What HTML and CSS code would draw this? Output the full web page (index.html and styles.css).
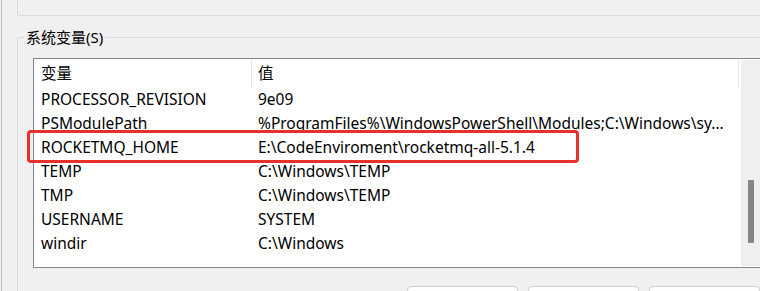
FILE: index.html
```html
<!DOCTYPE html>
<html lang="zh-CN">
<head>
    <meta charset="UTF-8">
    <meta name="viewport" content="width=device-width, initial-scale=1.0">
    <title>环境变量</title>
    <link rel="stylesheet" href="styles.css">
</head>
<body>
    <div class="dialog">
        <div class="user-group"></div>

        <fieldset class="sys-group">
            <legend>系统变量(S)</legend>
            <div class="listbox">
                <div class="list">
                    <div class="row head">
                        <span class="c1">变量</span>
                        <span class="c2">值</span>
                    </div>
                    <div class="row"><span class="c1">PROCESSOR_REVISION</span><span class="c2">9e09</span></div>
                    <div class="row"><span class="c1">PSModulePath</span><span class="c2">%ProgramFiles%\WindowsPowerShell\Modules;C:\Windows\sy...</span></div>
                    <div class="row"><span class="c1">ROCKETMQ_HOME</span><span class="c2">E:\CodeEnviroment\rocketmq-all-5.1.4</span></div>
                    <div class="row"><span class="c1">TEMP</span><span class="c2">C:\Windows\TEMP</span></div>
                    <div class="row"><span class="c1">TMP</span><span class="c2">C:\Windows\TEMP</span></div>
                    <div class="row"><span class="c1">USERNAME</span><span class="c2">SYSTEM</span></div>
                    <div class="row"><span class="c1">windir</span><span class="c2">C:\Windows</span></div>
                </div>
                <div class="scrollbar"><div class="thumb"></div></div>
                <!-- 红框标注 -->
                <div class="highlight"></div>
            </div>
            <div class="buttons">
                <button class="btn"></button>
                <button class="btn"></button>
                <button class="btn"></button>
            </div>
        </fieldset>
    </div>
</body>
</html>
```

FILE: styles.css
```css
html, body {
    overflow: hidden;
}
body {
    margin: 0;
    background: #f0f0f0;
    font-family: "Noto Sans", "Noto Sans CJK SC", sans-serif;
    font-size: 15.5px;
    color: #000;
}
.dialog {
    margin-left: 1px;
    border-left: 1px solid #c4c4c4;
    height: 291px;
    overflow: hidden;
}
.user-group {
    margin-left: 15px;
    height: 15px;
    border-left: 1px solid #dcdcdc;
    border-bottom: 1px solid #dcdcdc;
}
.sys-group {
    margin: 12px 0 0 15px;
    padding: 0;
    border: 1px solid #dcdcdc;
    border-right: none;
    border-bottom: none;
    min-inline-size: 0;
}
.sys-group legend {
    margin-left: 6px;
    padding: 0 2px;
    font-size: 15px;
    line-height: 18px;
}
.listbox {
    position: relative;
    display: flex;
    width: 727px;
    height: 206px;
    margin: 12px 0 0 15px;
    padding: 1px 0;
    border: 1px solid #828790;
    background: #fff;
}
.list {
    width: 706px;
}
.row {
    display: flex;
    height: 24px;
    line-height: 24px;
    white-space: nowrap;
}
.row.head {
    height: 27px;
    line-height: 27px;
}
.c1 {
    box-sizing: border-box;
    width: 218px;
    padding-left: 7px;
    border-right: 1px solid transparent;
}
.c2 {
    box-sizing: border-box;
    width: 487px;
    padding-left: 6px;
    border-right: 1px solid transparent;
    overflow: hidden;
}
.head .c1, .head .c2 {
    border-right-color: #e5e5e5;
}
.scrollbar {
    margin-left: 1px;
    flex: 1;
    background: #efefef;
    padding-top: 120px;
}
.thumb {
    width: 6px;
    height: 63px;
    margin-left: 7px;
    background: #858585;
    border-radius: 1px;
}
.highlight {
    position: absolute;
    left: -7px;
    top: 71px;
    width: 546px;
    height: 27px;
    border: 3px solid #e6302a;
    border-radius: 4px;
}
.buttons {
    display: flex;
    gap: 10px;
    margin-top: 18px;
    padding-left: 389px;
}
.btn {
    width: 112px;
    height: 24px;
    font: inherit;
    background: #fdfdfd;
    border: 1px solid #d0d0d0;
    border-radius: 4px;
}
```
